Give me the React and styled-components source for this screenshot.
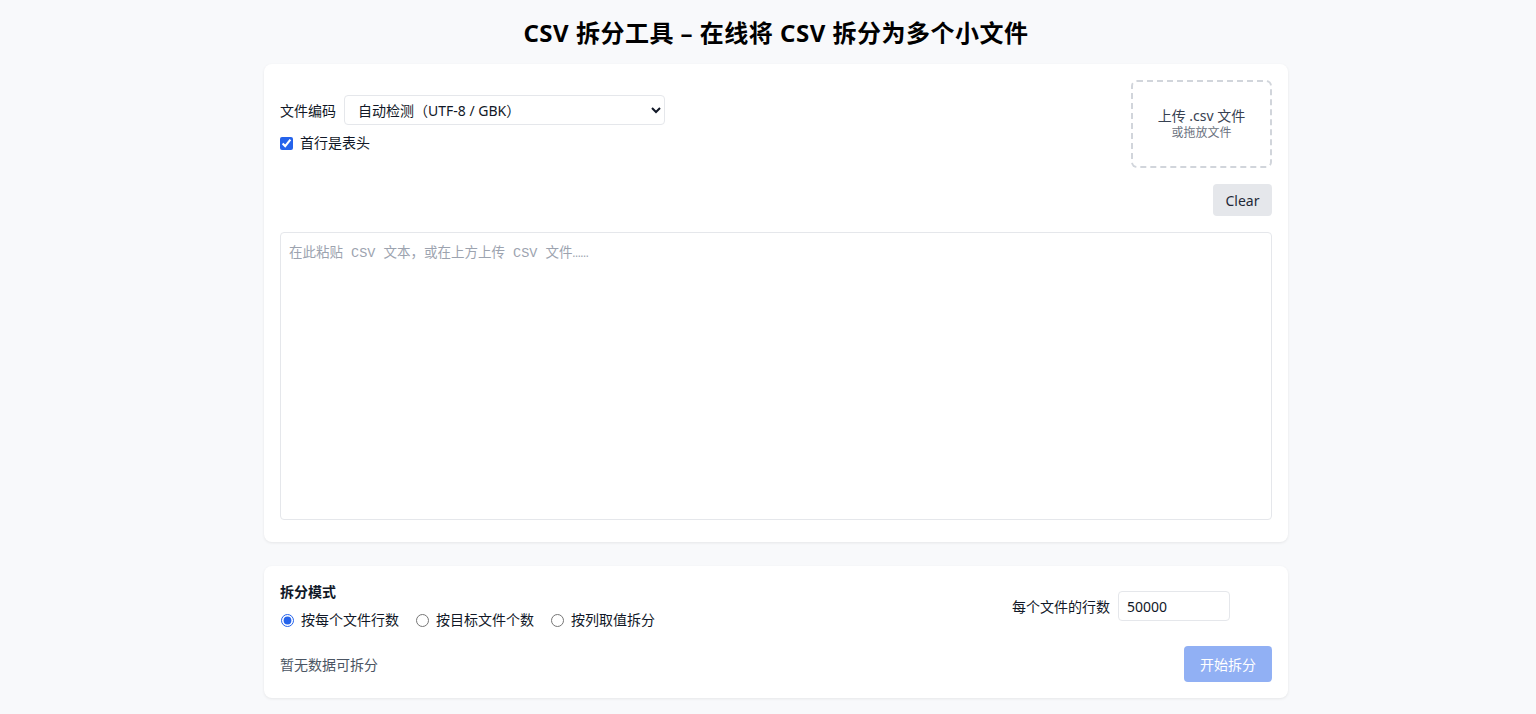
import React, { useState } from "react";
import styled, { createGlobalStyle } from "styled-components";

const GlobalStyle = createGlobalStyle`
  * { box-sizing: border-box; }
  body {
    margin: 0;
    background: #f8f9fb;
    font-family: "Noto Sans", "Noto Sans CJK SC", sans-serif;
    color: #111827;
  }
`;

const App = () => {
  const [mode, setMode] = useState("rows");
  const [header, setHeader] = useState(true);

  return (
    <StyledPage>
      <GlobalStyle />
      <StyledTitle>CSV 拆分工具 – 在线将 CSV 拆分为多个小文件</StyledTitle>

      <StyledCard>
        <StyledTopRow>
          <StyledOptions>
            <StyledField>
              <StyledLabel>文件编码</StyledLabel>
              <StyledSelect defaultValue="auto">
                <option value="auto">自动检测（UTF-8 / GBK）</option>
                <option value="utf8">UTF-8</option>
                <option value="gbk">GBK</option>
              </StyledSelect>
            </StyledField>
            <StyledCheckLabel>
              <StyledCheckbox
                type="checkbox"
                checked={header}
                onChange={(e) => setHeader(e.target.checked)}
              />
              首行是表头
            </StyledCheckLabel>
          </StyledOptions>
          <StyledDrop>
            <StyledDropTitle>上传 .csv 文件</StyledDropTitle>
            <StyledDropSub>或拖放文件</StyledDropSub>
          </StyledDrop>
        </StyledTopRow>
        <StyledActions>
          <StyledGhostButton>Clear</StyledGhostButton>
        </StyledActions>
        <StyledTextarea placeholder="在此粘贴 CSV 文本，或在上方上传 CSV 文件……" />
      </StyledCard>

      <StyledCard>
        <StyledModeRow>
          <div>
            <StyledSectionTitle>拆分模式</StyledSectionTitle>
            <StyledRadioGroup>
              {[
                ["rows", "按每个文件行数"],
                ["files", "按目标文件个数"],
                ["column", "按列取值拆分"],
              ].map(([key, text]) => (
                <StyledCheckLabel key={key}>
                  <StyledRadio
                    type="radio"
                    name="mode"
                    checked={mode === key}
                    onChange={() => setMode(key)}
                  />
                  {text}
                </StyledCheckLabel>
              ))}
            </StyledRadioGroup>
          </div>
          <StyledRowsField>
            <StyledLabel>每个文件的行数</StyledLabel>
            <StyledInput defaultValue="50000" />
          </StyledRowsField>
        </StyledModeRow>
        <StyledFooter>
          <StyledStatus>暂无数据可拆分</StyledStatus>
          <StyledPrimaryButton disabled>开始拆分</StyledPrimaryButton>
        </StyledFooter>
      </StyledCard>
    </StyledPage>
  );
};

const StyledPage = styled.div`
  width: 1040px;
  margin: 0 auto;
  padding: 16px 0 24px 16px;
  display: flex;
  flex-direction: column;
  gap: 24px;
`;

const StyledTitle = styled.h1`
  margin: 0 0 -10px;
  text-align: center;
  font-size: 24px;
  line-height: 34px;
  font-weight: 700;
  letter-spacing: 0.5px;
  color: #000000;
`;

const StyledCard = styled.div`
  background: #ffffff;
  border-radius: 8px;
  box-shadow: 0 1px 3px rgba(0, 0, 0, 0.08);
  padding: 16px;
`;

const StyledTopRow = styled.div`
  display: flex;
  justify-content: space-between;
  align-items: center;
`;

const StyledOptions = styled.div`
  display: flex;
  flex-direction: column;
  gap: 8px;
`;

const StyledField = styled.div`
  display: flex;
  align-items: center;
  gap: 8px;
`;

const StyledLabel = styled.span`
  font-size: 14px;
  color: #111827;
`;

const StyledSelect = styled.select`
  width: 321px;
  height: 30px;
  padding: 0 9px;
  border: 1px solid #e5e7eb;
  border-radius: 4px;
  background: #ffffff;
  font-family: inherit;
  font-size: 14px;
  color: #111827;
`;

const StyledCheckLabel = styled.label`
  display: flex;
  align-items: center;
  gap: 7px;
  font-size: 14px;
  line-height: 20px;
  color: #111827;
`;

const StyledCheckbox = styled.input`
  margin: 0;
  width: 13px;
  height: 13px;
  accent-color: #2563eb;
`;

const StyledRadio = styled.input`
  margin: 0 0 0 1px;
  width: 13px;
  height: 13px;
  accent-color: #2563eb;
`;

const StyledDrop = styled.div`
  width: 141px;
  height: 88px;
  border: 2px dashed #d1d5db;
  border-radius: 6px;
  display: flex;
  flex-direction: column;
  align-items: center;
  justify-content: center;
  text-align: center;
`;

const StyledDropTitle = styled.div`
  font-size: 14px;
  line-height: 18px;
  color: #374151;
`;

const StyledDropSub = styled.div`
  font-size: 12px;
  line-height: 16px;
  color: #6b7280;
`;

const StyledActions = styled.div`
  display: flex;
  justify-content: flex-end;
  margin: 16px 0;
`;

const StyledGhostButton = styled.button`
  width: 59px;
  height: 32px;
  padding: 0;
  border: none;
  border-radius: 4px;
  background: #e5e7eb;
  font-family: inherit;
  font-size: 14px;
  color: #1f2937;
`;

const StyledTextarea = styled.textarea`
  display: block;
  width: 100%;
  height: 288px;
  margin-bottom: 6px;
  padding: 8px;
  border: 1px solid #e5e7eb;
  border-radius: 4px;
  resize: none;
  font-family: "Liberation Mono", "Noto Sans CJK SC", monospace;
  font-size: 13.5px;
  &::placeholder {
    color: #9ca3af;
  }
`;

const StyledModeRow = styled.div`
  display: flex;
  justify-content: space-between;
  align-items: flex-start;
`;

const StyledSectionTitle = styled.div`
  font-size: 14px;
  font-weight: 700;
  line-height: 20px;
  margin-bottom: 8px;
  color: #111827;
`;

const StyledRadioGroup = styled.div`
  display: flex;
  gap: 16px;
`;

const StyledRowsField = styled.div`
  display: flex;
  align-items: center;
  gap: 8px;
  margin: 9px 42px 0 0;
`;

const StyledInput = styled.input`
  width: 112px;
  height: 30px;
  padding: 0 8px;
  border: 1px solid #e5e7eb;
  border-radius: 4px;
  font-family: inherit;
  font-size: 14px;
  color: #111827;
`;

const StyledFooter = styled.div`
  display: flex;
  justify-content: space-between;
  align-items: center;
  margin-top: 16px;
`;

const StyledStatus = styled.span`
  font-size: 14px;
  color: #4b5563;
`;

const StyledPrimaryButton = styled.button`
  width: 88px;
  height: 36px;
  border: none;
  border-radius: 4px;
  background: #2563eb;
  opacity: 0.5;
  font-family: inherit;
  font-size: 14px;
  color: #ffffff;
`;

export default App;
